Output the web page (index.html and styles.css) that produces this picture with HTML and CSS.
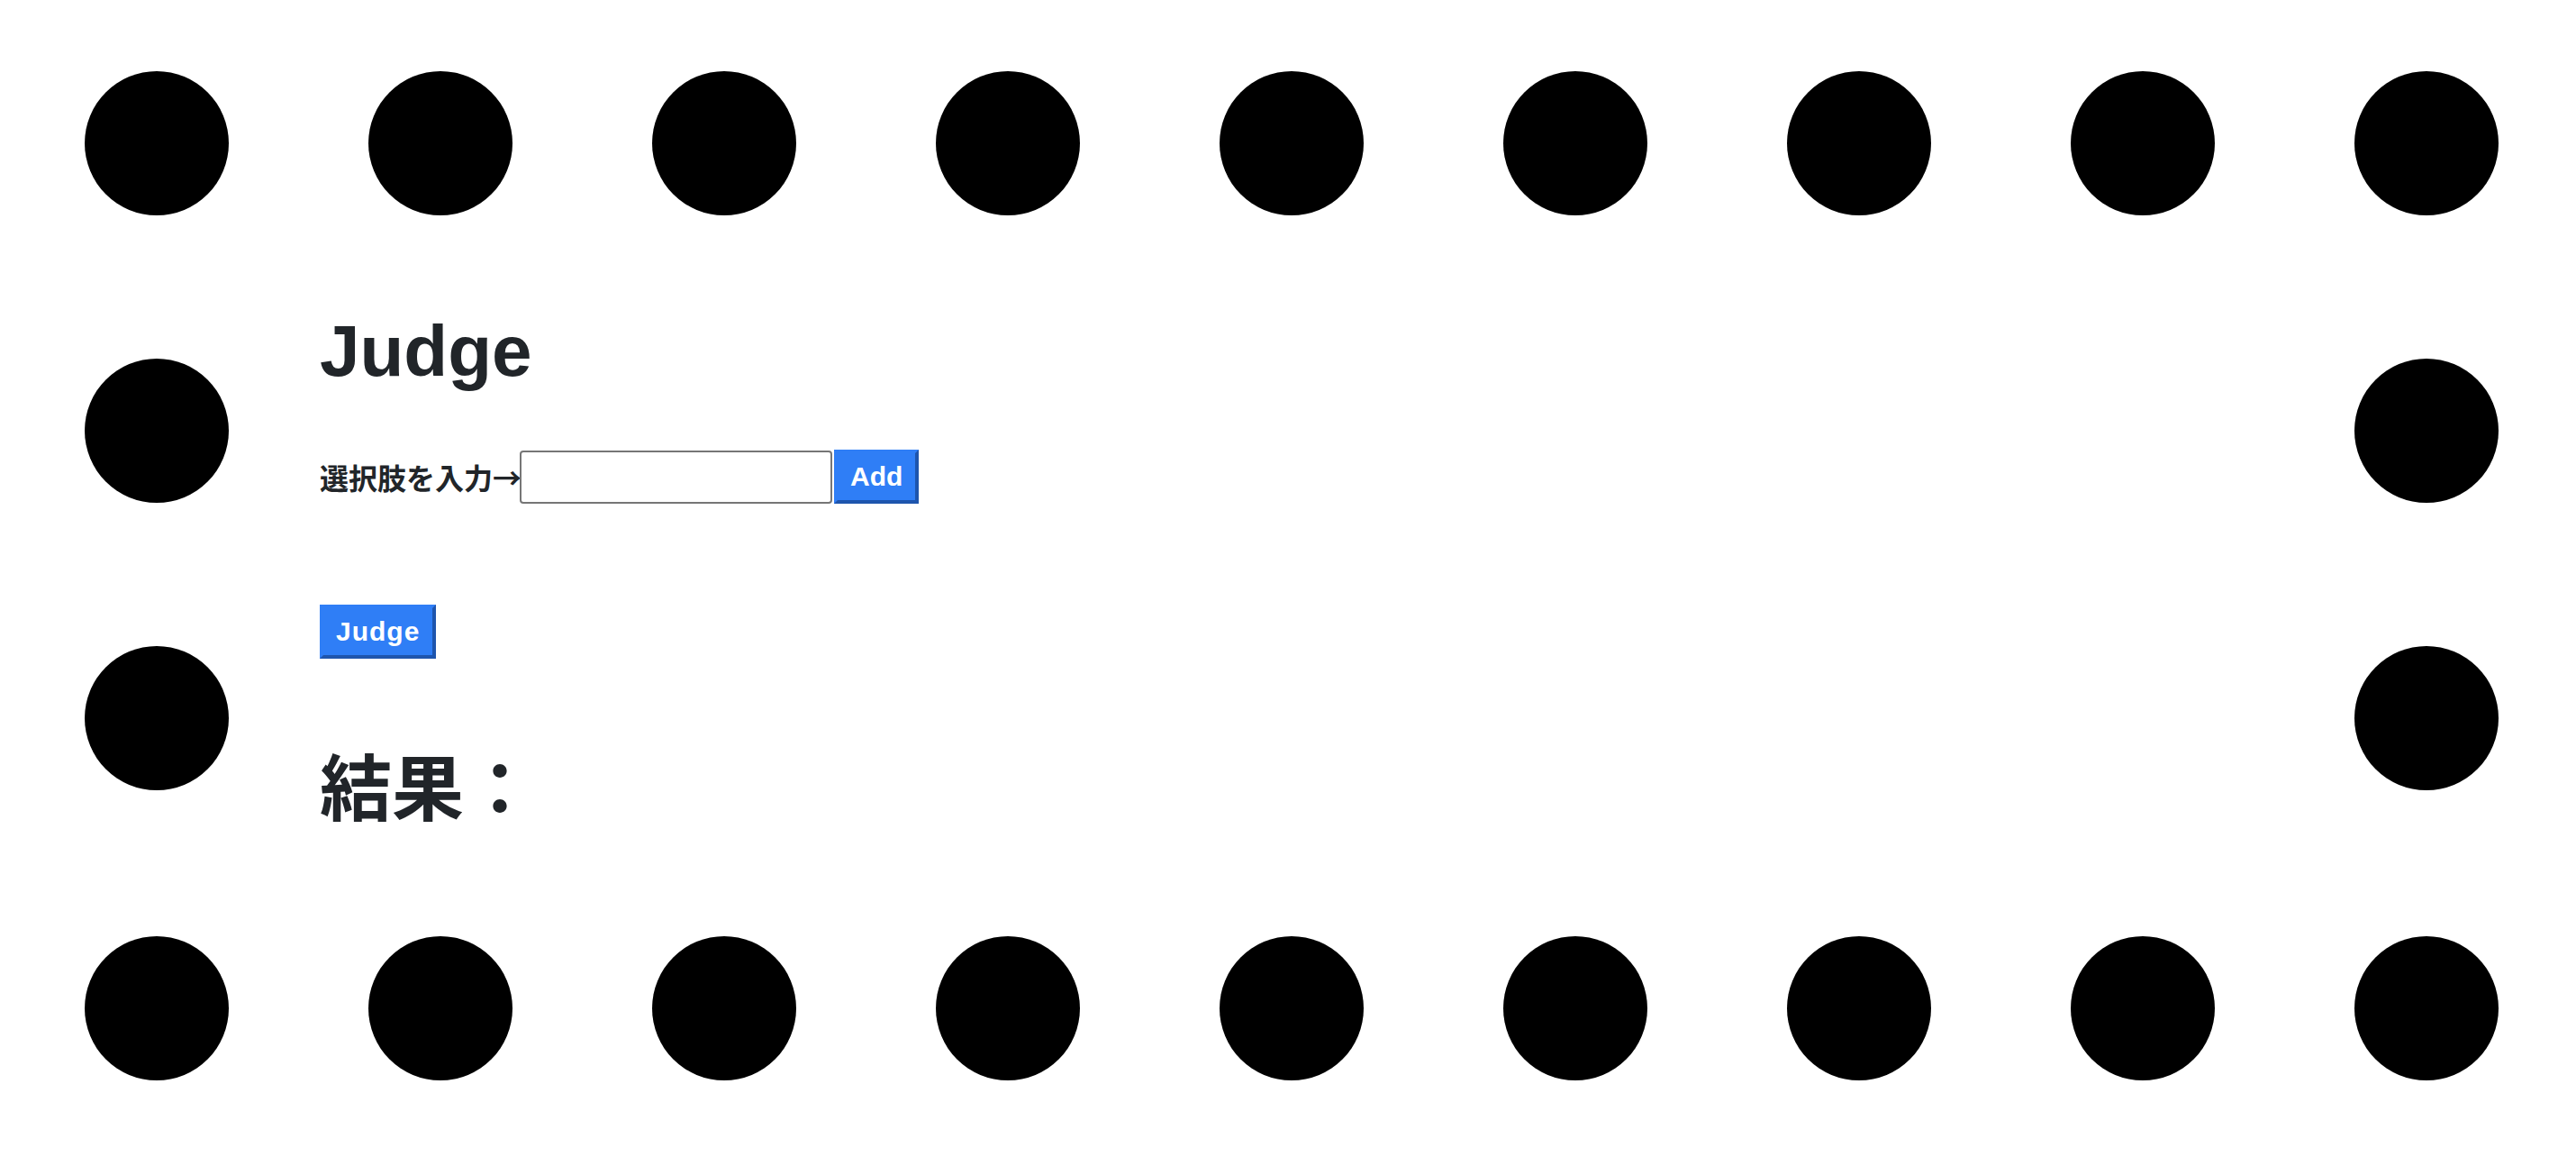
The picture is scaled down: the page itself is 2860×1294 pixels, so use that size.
FILE: index.html
```html
<!DOCTYPE html>
<html lang="ja">
<head>
<meta charset="utf-8">
<title>Judge</title>
<link rel="stylesheet" href="styles.css">
</head>
<body>
<div class="frame">
  <div class="dot-row">
    <span class="dot"></span><span class="dot"></span><span class="dot"></span>
    <span class="dot"></span><span class="dot"></span><span class="dot"></span>
    <span class="dot"></span><span class="dot"></span><span class="dot"></span>
  </div>
  <div class="middle">
    <div class="dot-col">
      <span class="dot"></span><span class="dot"></span>
    </div>
    <main class="content">
      <h1 class="title">Judge</h1>
      <div class="add-row">
        <label class="label" for="choice">選択肢を入力→</label><input id="choice" class="text-input" type="text"><button class="btn btn-add" type="button">Add</button>
      </div>
      <button class="btn btn-judge" type="button">Judge</button>
      <h1 class="result">結果：</h1>
    </main>
    <div class="dot-col">
      <span class="dot"></span><span class="dot"></span>
    </div>
  </div>
  <div class="dot-row">
    <span class="dot"></span><span class="dot"></span><span class="dot"></span>
    <span class="dot"></span><span class="dot"></span><span class="dot"></span>
    <span class="dot"></span><span class="dot"></span><span class="dot"></span>
  </div>
</div>
</body>
</html>
```
FILE: styles.css
```css
html, body {
  margin: 0;
  padding: 0;
  background: #ffffff;
}

body {
  font-family: "Liberation Sans", "Noto Sans CJK JP", sans-serif;
  color: #212529;
}

.frame {
  padding: 79px 0 0 94px;
  width: 2680px;
}

.dot-row {
  display: flex;
  justify-content: space-between;
  height: 160px;
}

.dot {
  display: block;
  width: 160px;
  height: 160px;
  border-radius: 50%;
  background: #000000;
  flex: none;
}

.middle {
  display: flex;
  height: 800px;
}

.dot-col {
  display: flex;
  flex-direction: column;
  gap: 159px;
  padding-top: 159px;
  flex: none;
}

.content {
  flex: 1;
  display: flex;
  flex-direction: column;
  align-items: flex-start;
  padding: 103px 0 0 101px;
}

.title {
  margin: 0 0 61px;
  font-family: "Liberation Sans", sans-serif;
  font-size: 80px;
  font-weight: 700;
  line-height: 96px;
  color: #212529;
}

.add-row {
  display: flex;
  align-items: center;
}

.label {
  font-family: "Noto Sans CJK JP", sans-serif;
  font-size: 32px;
  font-weight: 700;
  line-height: 48px;
  color: #212529;
  margin-right: -2px;
}

.text-input {
  box-sizing: border-box;
  width: 347px;
  height: 59px;
  margin: 0;
  padding: 2px 4px;
  border: 2px solid #767676;
  border-radius: 4px;
  background: #ffffff;
  font-size: 26px;
}

.btn {
  box-sizing: border-box;
  height: 60px;
  margin: 0;
  padding: 8px 14px;
  border-style: solid;
  border-width: 4px;
  border-color: #2f7ef6 #1e55ad #1e55ad #2f7ef6;
  background: #2f7ef6;
  color: #ffffff;
  font-family: "Liberation Sans", sans-serif;
  font-size: 30px;
  font-weight: 700;
  line-height: 36px;
  border-radius: 0;
}

.btn-add {
  margin-left: 2px;
}

.btn-judge {
  margin-top: 112px;
  letter-spacing: 1px;
}

.result {
  margin: 98px 0 0;
  font-family: "Liberation Sans", "Noto Sans CJK JP", sans-serif;
  font-size: 80px;
  font-weight: 700;
  line-height: 96px;
  color: #212529;
}
```
